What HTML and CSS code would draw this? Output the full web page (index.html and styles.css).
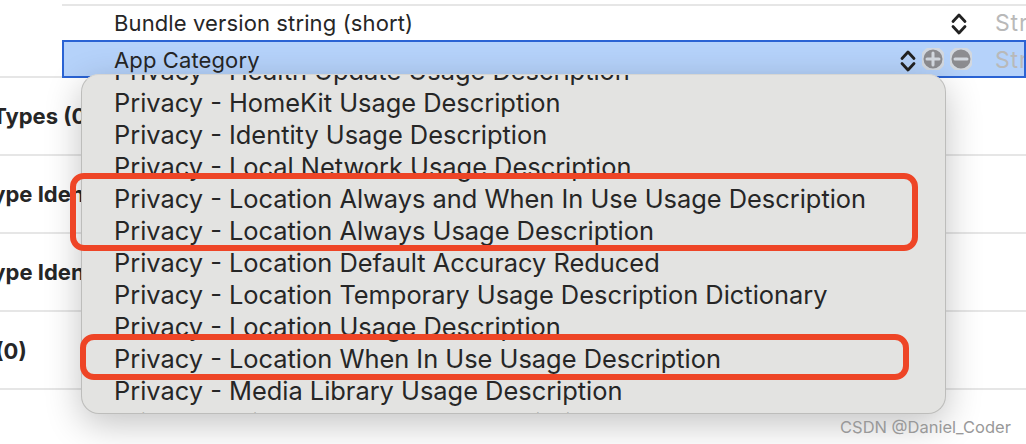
FILE: index.html
```html
<!DOCTYPE html>
<html lang="en">
<head>
    <meta charset="UTF-8">
    <meta name="viewport" content="width=device-width, initial-scale=1.0">
    <title>Info.plist keys</title>
    <link rel="stylesheet" href="styles.css">
</head>
<body>
    <div class="editor">
        <div class="plist-head">
            <div class="plist-row">
                <span class="key">Bundle version string (short)</span>
                <svg class="stepper" viewBox="0 0 16 24"><path d="M2 9.5 8 3l6 6.5M2 14.5 8 21l6-6.5"/></svg>
                <span class="type">String</span>
            </div>
            <div class="plist-row selected">
                <span class="key">App Category</span>
                <svg class="stepper" viewBox="0 0 16 24"><path d="M2 9.5 8 3l6 6.5M2 14.5 8 21l6-6.5"/></svg>
                <svg class="round-btn" viewBox="0 0 22 22"><circle cx="11" cy="11" r="11"/><path d="M11 5v12M5 11h12"/></svg>
                <svg class="round-btn" viewBox="0 0 22 22"><circle cx="11" cy="11" r="11"/><path d="M5 11h12"/></svg>
                <span class="type">String</span>
            </div>
        </div>
        <div class="section">Document Types (0)</div>
        <div class="section">Exported Type Identifiers (0)</div>
        <div class="section">Imported Type Identifiers (0)</div>
        <div class="section">URL Types (0)</div>
    </div>

    <div class="menu">
        <ul class="menu-list">
            <li>Privacy - Health Update Usage Description</li>
            <li>Privacy - HomeKit Usage Description</li>
            <li>Privacy - Identity Usage Description</li>
            <li>Privacy - Local Network Usage Description</li>
            <li>Privacy - Location Always and When In Use Usage Description</li>
            <li>Privacy - Location Always Usage Description</li>
            <li>Privacy - Location Default Accuracy Reduced</li>
            <li>Privacy - Location Temporary Usage Description Dictionary</li>
            <li>Privacy - Location Usage Description</li>
            <li>Privacy - Location When In Use Usage Description</li>
            <li>Privacy - Media Library Usage Description</li>
            <li>Privacy - Microphone Usage Description</li>
        </ul>
    </div>

    <div class="mark mark-top"></div>
    <div class="mark mark-bottom"></div>
    <div class="watermark">CSDN @Daniel_Coder</div>
</body>
</html>
```

FILE: styles.css
```css
html, body {
    height: 100%;
}
body {
    margin: 0;
    overflow: hidden;
    background: #fff;
    color: #262626;
    font-family: Inter, "Liberation Sans", sans-serif;
}
.editor {
    display: flex;
    flex-direction: column;
}
.plist-head {
    height: 76px;
    box-sizing: border-box;
    padding: 4px 0 0 62px;
}
.plist-row {
    display: flex;
    align-items: center;
    box-sizing: border-box;
    height: 36px;
    padding-left: 52px;
    font-size: 22px;
    letter-spacing: 0.12px;
    border-top: 2px solid #e6e6e6;
    overflow: hidden;
    position: relative;
}
.plist-row.selected {
    height: 38px;
    padding: 1px 0 0 50px;
    border: 2px solid #2a63d4;
    background: #b5d2fa;
}
.key {
    flex: 1;
    white-space: nowrap;
}
.stepper {
    width: 16px;
    height: 24px;
    margin-top: 2px;
    flex: none;
    fill: none;
    stroke: #222;
    stroke-width: 2.8;
    stroke-linecap: round;
    stroke-linejoin: round;
}
.round-btn {
    width: 22px;
    height: 22px;
    margin: -2px 0 0 6px;
    flex: none;
    fill: #8c8c90;
    stroke: #d3d8df;
    stroke-width: 3;
    stroke-linecap: round;
}
.plist-row .stepper {
    margin-right: 28px;
}
.plist-row.selected .stepper {
    margin-right: 0;
}
.type {
    width: 31px;
    flex: none;
    color: #b9b9b9;
    font-size: 23px;
    letter-spacing: 0.8px;
    white-space: nowrap;
    overflow: hidden;
}
.plist-row.selected .type {
    margin-left: 23px;
    margin-right: -2px;
}
.section {
    height: 78px;
    box-sizing: border-box;
    display: flex;
    align-items: center;
    border-top: 2px solid #e6e6e6;
    font-size: 22px;
    font-weight: 700;
    white-space: nowrap;
    text-indent: -124px;
}
.section:last-child {
    height: 80px;
    padding-top: 2px;
    border-bottom: 2px solid #e6e6e6;
}
.menu {
    position: absolute;
    left: 81px;
    top: 74px;
    width: 865px;
    height: 340px;
    box-sizing: border-box;
    overflow: hidden;
    background: #e3e3e1;
    border: 1px solid #bdbdbb;
    border-top-color: #d6d6d4;
    border-radius: 18px;
    box-shadow: 0 10px 36px rgba(0, 0, 0, 0.24);
}
.menu-list {
    list-style: none;
    margin: -20px 0 0;
    padding: 0 0 0 32px;
    font-size: 25.4px;
    line-height: 32px;
    white-space: nowrap;
}
.mark {
    position: absolute;
    box-sizing: border-box;
    border: 6px solid #ee4526;
    border-radius: 14px;
}
.mark-top {
    left: 70px;
    top: 173px;
    width: 848px;
    height: 78px;
}
.mark-bottom {
    left: 80px;
    top: 334px;
    width: 829px;
    height: 46px;
}
.watermark {
    position: absolute;
    left: 840px;
    top: 417px;
    color: #999;
    font-size: 16.5px;
    white-space: nowrap;
}
```
